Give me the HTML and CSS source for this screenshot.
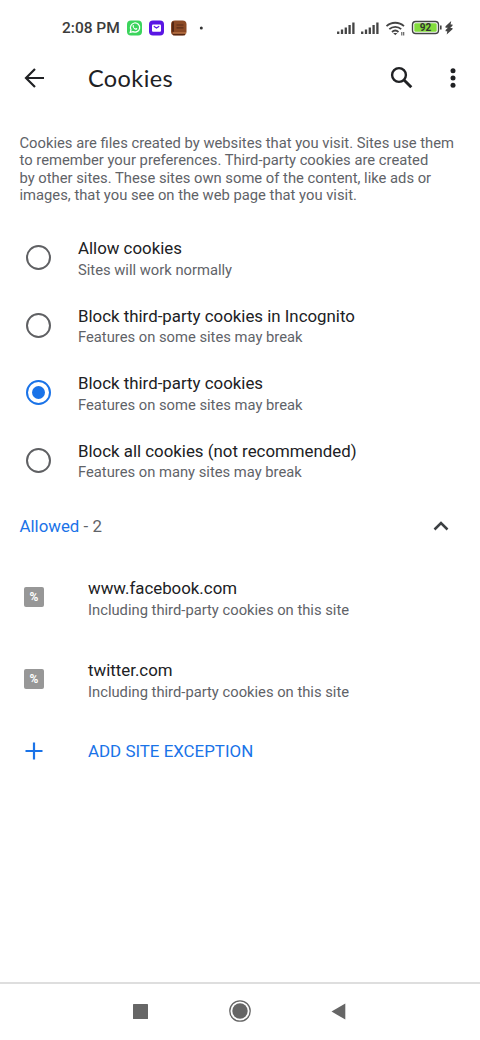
FILE: index.html
```html
<!DOCTYPE html>
<html lang="en">
<head>
<meta charset="utf-8">
<title>Cookies</title>
<link rel="stylesheet" href="styles.css">
</head>
<body>
<div class="screen">
  <div class="status">
    <span class="time">2:08 PM</span>
    <svg class="apps" width="78" height="18" viewBox="0 0 78 18">
      <rect x="0" y="1.500" width="15" height="15" rx="4" fill="#3bd45c"/>
      <path d="M3.200 13.400l.8-2.700a4.600 4.600 0 1 1 1.900 1.900z" fill="none" stroke="#fff" stroke-width="1.200"/>
      <path d="M5.700 6.500c.5-.8 1.200-.4 1.300.8l-.3.700c.4.800 1 1.300 1.800 1.600l.6-.6c1.300.2 1.600.8.8 1.600-1.500 1.100-4.900-2.100-4.200-4.100z" fill="#fff"/>
      <rect x="22" y="1.500" width="15" height="15" rx="4" fill="#5a16e4"/>
      <rect x="25" y="5.500" width="9" height="7.300" rx="1" fill="#fff"/>
      <path d="M26.800 7.300l2.700 1.700 2.700-1.700" fill="none" stroke="#5a16e4" stroke-width="1.200"/>
      <rect x="44" y="1.500" width="15.500" height="15" rx="4" fill="#8b4925"/>
      <path d="M46 13.500h13v1.200H46z" fill="#d58b57"/>
      <path d="M45 2.800h2v10h-2zM46 14.800h12v1.500H46z" fill="#552713"/>
      <path d="M49.500 6h7M49.500 8.800h7" stroke="#5b2d18" stroke-width="1.200"/>
      <circle cx="74.300" cy="9" r="1.500" fill="#333"/>
    </svg>
    <span class="grow"></span>
    <svg class="signals" width="120" height="20" viewBox="0 0 120 20">
      <g stroke="#444" stroke-width="2.300">
        <path d="M2.200 16v-2.500M6 16v-4.500M9.800 16V9.500M13.600 16V7M17.400 16V4.500"/>
        <path d="M26.200 16v-2.500M30 16v-4.500M33.800 16V9.500M37.600 16V7M41.400 16V4.500"/>
      </g>
      <g fill="none" stroke="#444" stroke-width="1.800">
        <path d="M50.500 8.200c5-4.600 12.500-4.600 17.500 0M53.300 11.200c3.400-3.100 8.500-3.100 11.900 0M56 14c1.900-1.700 4.600-1.700 6.500 0"/>
      </g>
      <path d="M57.200 15h4.200l-2.100 2.300z" fill="#444"/>
      <path d="M65.800 14v3.500M67.700 14v3.500" stroke="#555" stroke-width="1.100"/>
      <rect x="76.500" y="3.500" width="26" height="12" rx="3.200" fill="#fff" stroke="#444" stroke-width="1.400"/>
      <rect x="78.300" y="5.300" width="22.400" height="8.400" rx="1.300" fill="#83dc3c"/>
      <text x="89.500" y="13" class="percent">92</text>
      <path d="M104.800 7.500v4" stroke="#444" stroke-width="1.600"/>
      <path d="M115.200 3l-5.700 5.300v1.400h2.400l-2.300 2.200v1.300h1.700l-.6 3.300 5.800-5.300V9.900h-2.300l2.300-2.200V6.400h-1.900z" fill="#444"/>
    </svg>
  </div>

  <header class="toolbar">
    <svg class="back" width="22" height="22" viewBox="0 0 22 22"><path d="M20 11H2.600M11 2l-9 9 9 9" fill="none" stroke="#202124" stroke-width="2.200"/></svg>
    <h1>Cookies</h1>
    <svg class="search" width="24" height="24" viewBox="0 0 24 24"><circle cx="9" cy="9" r="6.900" fill="none" stroke="#202124" stroke-width="2.400"/><path d="M14 14l7.300 7.300" stroke="#202124" stroke-width="2.900"/></svg>
    <svg class="more" width="6" height="20" viewBox="0 0 6 20"><circle cx="3" cy="2.700" r="2.500"/><circle cx="3" cy="10" r="2.500"/><circle cx="3" cy="17.300" r="2.500"/></svg>
  </header>

  <p class="intro">Cookies are files created by websites that you visit. Sites use them<br>to remember your preferences. Third-party cookies are created<br>by other sites. These sites own some of the content, like ads or<br>images, that you see on the web page that you visit.</p>

  <div class="options">
    <div class="option"><span class="radio"></span><div><div class="name">Allow cookies</div><div class="note">Sites will work normally</div></div></div>
    <div class="option"><span class="radio"></span><div><div class="name">Block third-party cookies in Incognito</div><div class="note">Features on some sites may break</div></div></div>
    <div class="option"><span class="radio checked"></span><div><div class="name">Block third-party cookies</div><div class="note">Features on some sites may break</div></div></div>
    <div class="option"><span class="radio"></span><div><div class="name">Block all cookies (not recommended)</div><div class="note">Features on many sites may break</div></div></div>
  </div>

  <div class="allowed">
    <span><span class="blue">Allowed</span> - 2</span>
    <svg width="16" height="10" viewBox="0 0 16 10"><path d="M1.500 8.500L8 2l6.500 6.500" fill="none" stroke="#3c4043" stroke-width="2.500"/></svg>
  </div>

  <div class="site"><span class="favicon">%</span><div><div class="name">www.facebook.com</div><div class="note">Including third-party cookies on this site</div></div></div>
  <div class="site"><span class="favicon">%</span><div><div class="name">twitter.com</div><div class="note">Including third-party cookies on this site</div></div></div>

  <div class="add">
    <svg width="18" height="18" viewBox="0 0 18 18"><path d="M9 .5v17M.5 9h17" stroke="#1a73e8" stroke-width="2.200"/></svg>
    <span>ADD SITE EXCEPTION</span>
  </div>

  <nav class="navbar">
    <svg width="15" height="15" viewBox="0 0 15 15"><rect width="15" height="15" rx=".6" fill="#666"/></svg>
    <svg width="22" height="22" viewBox="0 0 22 22"><circle cx="11" cy="11" r="10.200" fill="none" stroke="#666" stroke-width="1.300"/><circle cx="11" cy="11" r="7.700" fill="#666"/></svg>
    <svg width="15" height="17" viewBox="0 0 15 17"><path d="M.5 8.500L14.300.4v16.200z" fill="#666"/></svg>
  </nav>
</div>
</body>
</html>
```
FILE: styles.css
```css
body {
  margin: 0;
  background: #fff;
  font-family: Roboto, sans-serif;
  color: #202124;
}
.screen {
  width: 480px;
  height: 1040px;
  display: flex;
  flex-direction: column;
  overflow: hidden;
}
svg { display: block; flex: none; }
.status {
  height: 56px;
  box-sizing: border-box;
  padding: 0 24px 0 62px;
  display: flex;
  align-items: center;
}
.time {
  width: 65px;
  font-size: 15.500px;
  font-weight: 500;
  white-space: nowrap;
  color: #3c3c3c;
}
.grow { flex: 1; }
.percent {
  font: 700 10px Roboto, sans-serif;
  text-anchor: middle;
  fill: #333;
}
.toolbar {
  height: 44px;
  padding: 0 24px 0 24px;
  display: flex;
  align-items: center;
}
.toolbar h1 {
  margin: 0 0 1px 42px;
  flex: 1;
  font: 400 23.500px/30px Lato, sans-serif;
  letter-spacing: 0.400px;
}
.search { margin-right: 0.500px; }
.more { margin-left: 36px; fill: #202124; }
.intro {
  margin: 35px 0 0 19.500px;
  font-size: 14.780px;
  line-height: 17.300px;
  color: #5f6368;
  white-space: nowrap;
}
.options { margin-top: 20.500px; }
.option {
  height: 67.500px;
  padding-left: 26px;
  display: flex;
  align-items: center;
}
.option .name { padding-top: 1px; }
.radio {
  width: 25px;
  height: 25px;
  box-sizing: border-box;
  flex: none;
  border: 2.500px solid #5f6063;
  border-radius: 50%;
  margin: 0 27px 1px 0;
  display: grid;
  place-items: center;
}
.radio.checked { border-color: #1a73e8; }
.radio.checked::before {
  content: "";
  width: 13px;
  height: 13px;
  border-radius: 50%;
  background: #1a73e8;
}
.name { font-size: 16.850px; line-height: 21.500px; white-space: nowrap; }
.note { font-size: 14.760px; line-height: 20px; color: #5f6368; white-space: nowrap; }
.allowed {
  height: 62px;
  padding: 0 31px 0 19.500px;
  display: flex;
  align-items: center;
  justify-content: space-between;
  font-size: 16.850px;
  color: #5f6368;
}
.blue { color: #1a73e8; }
.site {
  height: 82px;
  padding: 1px 0 0 24px;
  box-sizing: border-box;
  position: relative;
  display: flex;
  align-items: center;
}
.allowed + .site { margin-top: 0.700px; }
.favicon {
  width: 20px;
  height: 20px;
  margin: 0 44px 3px 0;
  border-radius: 2px;
  background: #979797;
  color: #fff;
  font-size: 12px;
  font-weight: 700;
  line-height: 20px;
  text-align: center;
}
.add {
  height: 40px;
  margin-top: 10px;
  padding-left: 25px;
  display: flex;
  align-items: center;
  gap: 45px;
  font-size: 16.900px;
  color: #1a73e8;
}
.navbar {
  margin-top: auto;
  height: 54px;
  border-top: 2px solid #dedede;
  padding: 0 134px 2px 133px;
  display: flex;
  align-items: center;
  justify-content: space-between;
}
```
